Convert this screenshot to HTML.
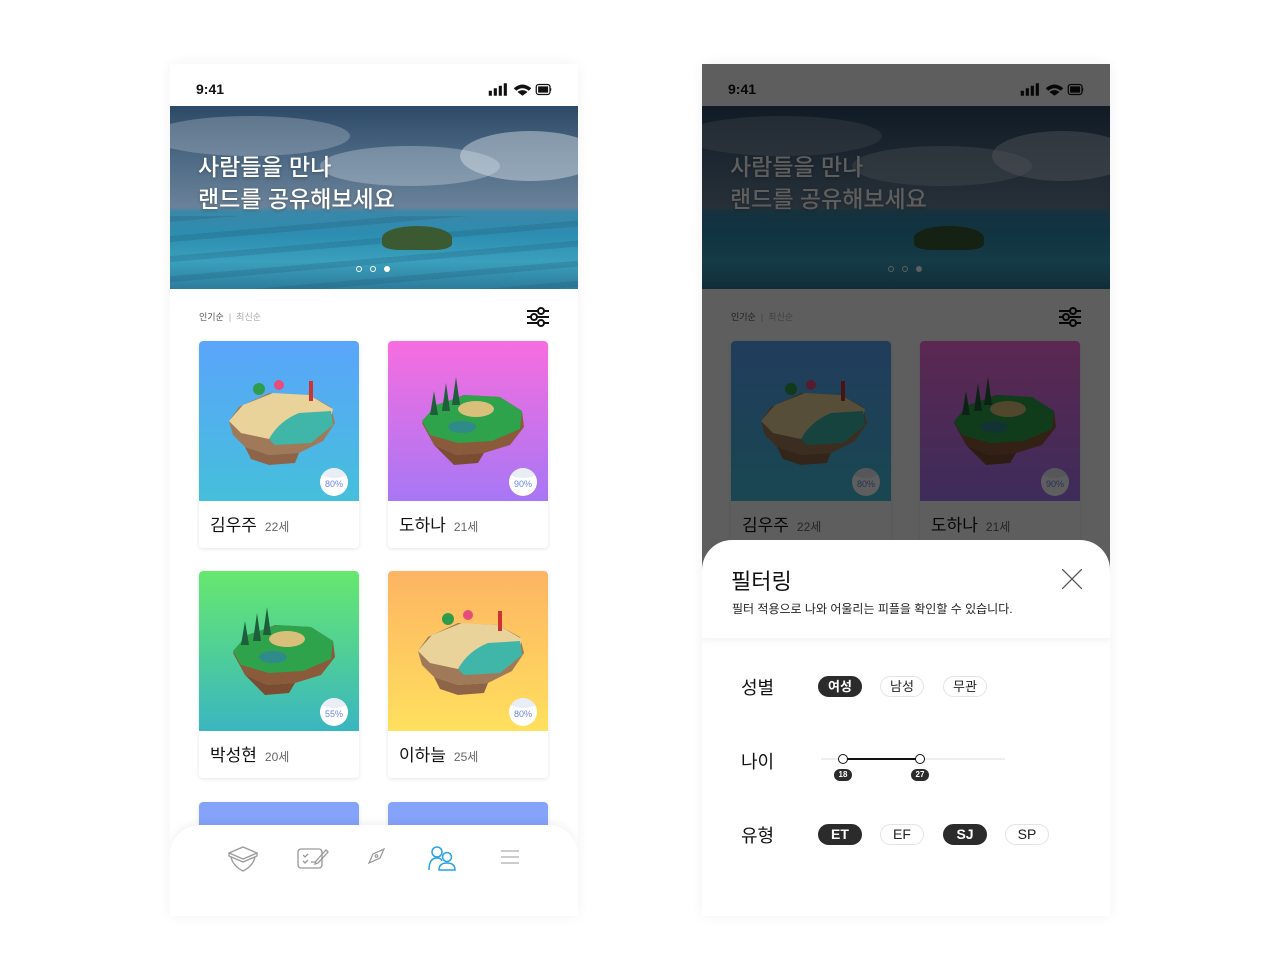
<!DOCTYPE html>
<html><head><meta charset="utf-8">
<style>
*{margin:0;padding:0;box-sizing:border-box}
body{width:1280px;height:980px;background:#fff;font-family:"Liberation Sans","Noto Sans CJK KR",sans-serif;position:relative;overflow:hidden}
.phone{position:absolute;top:64px;width:408px;height:852px;background:#fff;overflow:hidden;box-shadow:0 0 12px rgba(0,0,0,0.06)}
.time{position:absolute;left:26px;top:17px;font-size:14px;font-weight:bold;color:#111}
.stat{position:absolute;right:26px;top:18px}
.banner{position:absolute;left:0;top:42px;width:408px;height:183px;overflow:hidden;background:linear-gradient(180deg,#2c4966 0%,#4f6b86 30%,#6a8299 55%,#3a87a8 58%,#2c8db0 70%,#3aa0bd 85%,#2d7c9c 100%)}
.btxt{position:absolute;left:28px;top:45px;color:#fff;font-size:23px;line-height:32px;font-weight:500;text-shadow:0 1px 3px rgba(0,0,0,.3)}
.sort{position:absolute;left:29px;top:246px;font-size:9px;color:#555}
.sort span{color:#aaa}
.card{position:absolute;width:160px;height:207px;background:#fff;border-radius:4px;box-shadow:0 1px 4px rgba(0,0,0,0.1);overflow:hidden}
.card .img{position:absolute;left:0;top:0;width:160px;height:160px;border-radius:4px 4px 0 0}
.card .nm{position:absolute;left:11px;top:170px;font-size:17px;color:#111}
.card .nm span{font-size:12px;color:#666;margin-left:8px}
.pct{position:absolute;right:11px;bottom:5px;width:28px;height:28px;border-radius:50%;background:#fff;font-size:9px;color:#6c86e8;text-align:center;line-height:32px;overflow:hidden}
.pct:before{content:"";position:absolute;left:-4px;top:-12px;width:36px;height:22px;border-radius:50%;background:rgba(200,210,230,.4)}
.nav{position:absolute;left:0;top:761px;width:408px;height:91px;background:#fff;border-radius:30px 30px 0 0;box-shadow:0 -3px 8px rgba(0,0,0,0.05)}
.ov{position:absolute;left:0;top:0;width:408px;height:852px;background:rgba(0,0,0,0.63)}
.sheet{position:absolute;left:0;top:476px;width:408px;height:376px;background:#fff;border-radius:30px 30px 0 0}
.sh-head{position:absolute;left:0;top:0;width:408px;height:98px;box-shadow:0 3px 6px rgba(0,0,0,0.05)}
.lbl{position:absolute;left:39px;font-size:18px;color:#111}
.chip{position:absolute;width:44px;height:21px;border-radius:11px;border:1px solid #e4e4e4;font-size:13px;text-align:center;line-height:19px;color:#222;background:#fff}
.chip.on{background:#2b2b2b;border-color:#2b2b2b;color:#fff;font-weight:bold}
</style></head><body>
<svg width="0" height="0" style="position:absolute">
<defs>
<symbol id="beach" viewBox="0 0 160 160">
<path d="M30 80 L40 66 70 52 110 54 132 66 136 82 124 100 100 112 70 114 46 106 34 94Z" fill="#a07a58"/>
<path d="M30 80 L44 64 74 52 110 54 134 68 130 84 104 96 70 98 42 92Z" fill="#e9d39a"/>
<path d="M70 98 Q80 80 100 72 L132 70 134 84 112 102 76 104Z" fill="#3fb6a8"/>
<path d="M46 106 L70 114 100 112 96 122 70 124 52 118Z" fill="#8d6447"/>
<circle cx="60" cy="48" r="6" fill="#2e9c4a"/><circle cx="80" cy="44" r="5" fill="#e74c7c"/><rect x="110" y="40" width="4" height="20" fill="#c33"/>
</symbol>
<symbol id="forest" viewBox="0 0 160 160">
<path d="M34 82 L46 66 76 54 112 56 134 70 136 86 122 104 96 112 68 114 46 104Z" fill="#8a5a3a"/>
<path d="M34 80 L48 64 78 54 112 56 134 70 132 88 104 100 70 102 42 94Z" fill="#2fa24c"/>
<ellipse cx="88" cy="68" rx="18" ry="8" fill="#d8c07a"/><ellipse cx="74" cy="86" rx="14" ry="6" fill="#2e8b8a"/>
<path d="M46 50 L50 74 42 74Z M58 42 L62 70 54 70Z M68 36 L72 64 64 64Z" fill="#1e5e3a"/>
<path d="M46 104 L68 114 96 112 90 122 66 124Z" fill="#7a4c32"/>
</symbol>
</defs></svg>

<!-- LEFT PHONE -->
<div class="phone" style="left:170px">
<div class="time">9:41</div>
<svg class="stat" width="64" height="15" viewBox="0 0 50 12"><rect x="0" y="7" width="2.5" height="4" fill="#111"/><rect x="4" y="5" width="2.5" height="6" fill="#111"/><rect x="8" y="3" width="2.5" height="8" fill="#111"/><rect x="12" y="1" width="2.5" height="10" fill="#111"/><path d="M20 5 Q27 -1 34 5 L32 7 Q27 3 22 7Z M23 8 Q27 5 31 8 L27 11Z" fill="#111"/><rect x="38" y="2" width="11" height="8" rx="2" fill="none" stroke="#111" stroke-width="1"/><rect x="39.5" y="3.5" width="8" height="5" fill="#111"/><rect x="49.3" y="5" width="0.7" height="2" fill="#111"/></svg>
<div class="banner">
<div style="position:absolute;left:-20px;top:10px;width:200px;height:40px;border-radius:50%;background:rgba(200,210,220,.3)"></div>
<div style="position:absolute;left:150px;top:40px;width:180px;height:40px;border-radius:50%;background:rgba(210,220,230,.35)"></div>
<div style="position:absolute;left:290px;top:25px;width:140px;height:50px;border-radius:50%;background:rgba(220,228,236,.45)"></div>
<div style="position:absolute;left:0;top:110px;width:408px;height:73px;background:repeating-linear-gradient(175deg,rgba(30,80,110,.22) 0 6px,transparent 6px 20px)"></div>
<div style="position:absolute;left:212px;top:120px;width:70px;height:24px;border-radius:60% 60% 30% 30%;background:#3b5a32"></div>
<div class="btxt">사람들을 만나<br>랜드를 공유해보세요</div>
<div style="position:absolute;left:186px;top:160px;width:6px;height:6px;border:1px solid #fff;border-radius:50%"></div>
<div style="position:absolute;left:200px;top:160px;width:6px;height:6px;border:1px solid #fff;border-radius:50%"></div>
<div style="position:absolute;left:214px;top:160px;width:6px;height:6px;background:#fff;border-radius:50%"></div>
</div>
<div class="sort">인기순 <span>&nbsp;|&nbsp; 최신순</span></div>
<svg style="position:absolute;left:357px;top:243px" width="22" height="20" viewBox="0 0 22 20" fill="none" stroke="#111" stroke-width="2"><path d="M0 4H22M0 10H22M0 16H22"/><circle cx="14" cy="4" r="3" fill="#fff"/><circle cx="7" cy="10" r="3" fill="#fff"/><circle cx="14" cy="16" r="3" fill="#fff"/></svg>

<div class="card" style="left:29px;top:277px"><div class="img" style="background:linear-gradient(#5aa5fb,#45bfdb)"><svg width="160" height="160"><use href="#beach"/></svg><div class="pct">80%</div></div><div class="nm">김우주<span>22세</span></div></div>
<div class="card" style="left:218px;top:277px"><div class="img" style="background:linear-gradient(#f76ddf,#a777f5)"><svg width="160" height="160"><use href="#forest"/></svg><div class="pct">90%</div></div><div class="nm">도하나<span>21세</span></div></div>
<div class="card" style="left:29px;top:507px"><div class="img" style="background:linear-gradient(#66e86e,#3ab6c0)"><svg width="160" height="160"><use href="#forest"/></svg><div class="pct">55%</div></div><div class="nm">박성현<span>20세</span></div></div>
<div class="card" style="left:218px;top:507px"><div class="img" style="background:linear-gradient(#fdb463,#ffe05e)"><svg width="160" height="160"><use href="#beach"/></svg><div class="pct">80%</div></div><div class="nm">이하늘<span>25세</span></div></div>
<div class="card" style="left:29px;top:738px"><div class="img" style="background:#86a3fb"></div></div>
<div class="card" style="left:218px;top:738px"><div class="img" style="background:#86a3fb"></div></div>

<div class="nav">
<svg style="position:absolute;left:58px;top:21px" width="30" height="26" viewBox="0 0 30 26" fill="none" stroke="#999" stroke-width="1.3"><path d="M1 7L15 1 29 7 15 13Z"/><path d="M1 7V10L15 16 29 10V7"/><path d="M3 11Q5 20 15 25Q25 20 27 11"/></svg>
<svg style="position:absolute;left:127px;top:22px" width="32" height="22" viewBox="0 0 32 22" fill="none" stroke="#999" stroke-width="1.3"><rect x="1" y="2" width="24" height="19" rx="3"/><path d="M6 8l2 2 3-3M6 14l2 2 3-3M14 15h5"/><path d="M19 14L29 3 31 5 21 16 18 17Z"/></svg>
<svg style="position:absolute;left:198px;top:23px" width="18" height="16" viewBox="0 0 18 16" fill="none" stroke="#999" stroke-width="1.2"><path d="M1 15L5 6 16 1 12 10Z"/><circle cx="8.5" cy="8" r="1.3"/></svg>
<svg style="position:absolute;left:258px;top:20px" width="28" height="26" viewBox="0 0 28 26" fill="none" stroke="#27a2e4" stroke-width="1.5"><circle cx="9" cy="7" r="5"/><path d="M1 25Q1 13 9 13Q13 13 14 16"/><circle cx="19" cy="12" r="4.5"/><path d="M11 25Q11 18 19 18Q27 18 27 25Z"/></svg>
<svg style="position:absolute;left:331px;top:25px" width="18" height="14" viewBox="0 0 18 14" stroke="#bbb" stroke-width="1.4"><path d="M0 1H18M0 7H18M0 13H18"/></svg>
</div>
</div>

<!-- RIGHT PHONE -->
<div class="phone" style="left:702px">
<div class="time">9:41</div>
<svg class="stat" width="64" height="15" viewBox="0 0 50 12"><rect x="0" y="7" width="2.5" height="4" fill="#111"/><rect x="4" y="5" width="2.5" height="6" fill="#111"/><rect x="8" y="3" width="2.5" height="8" fill="#111"/><rect x="12" y="1" width="2.5" height="10" fill="#111"/><path d="M20 5 Q27 -1 34 5 L32 7 Q27 3 22 7Z M23 8 Q27 5 31 8 L27 11Z" fill="#111"/><rect x="38" y="2" width="11" height="8" rx="2" fill="none" stroke="#111" stroke-width="1"/><rect x="39.5" y="3.5" width="8" height="5" fill="#111"/><rect x="49.3" y="5" width="0.7" height="2" fill="#111"/></svg>
<div class="banner">
<div style="position:absolute;left:-20px;top:10px;width:200px;height:40px;border-radius:50%;background:rgba(200,210,220,.3)"></div>
<div style="position:absolute;left:150px;top:40px;width:180px;height:40px;border-radius:50%;background:rgba(210,220,230,.35)"></div>
<div style="position:absolute;left:290px;top:25px;width:140px;height:50px;border-radius:50%;background:rgba(220,228,236,.45)"></div>
<div style="position:absolute;left:212px;top:120px;width:70px;height:24px;border-radius:60% 60% 30% 30%;background:#3b5a32"></div>
<div class="btxt">사람들을 만나<br>랜드를 공유해보세요</div>
<div style="position:absolute;left:186px;top:160px;width:6px;height:6px;border:1px solid #fff;border-radius:50%"></div>
<div style="position:absolute;left:200px;top:160px;width:6px;height:6px;border:1px solid #fff;border-radius:50%"></div>
<div style="position:absolute;left:214px;top:160px;width:6px;height:6px;background:#fff;border-radius:50%"></div>
</div>
<div class="sort">인기순 <span>&nbsp;|&nbsp; 최신순</span></div>
<svg style="position:absolute;left:357px;top:243px" width="22" height="20" viewBox="0 0 22 20" fill="none" stroke="#111" stroke-width="2"><path d="M0 4H22M0 10H22M0 16H22"/><circle cx="14" cy="4" r="3" fill="#fff"/><circle cx="7" cy="10" r="3" fill="#fff"/><circle cx="14" cy="16" r="3" fill="#fff"/></svg>
<div class="card" style="left:29px;top:277px"><div class="img" style="background:linear-gradient(#5aa5fb,#45bfdb)"><svg width="160" height="160"><use href="#beach"/></svg><div class="pct">80%</div></div><div class="nm">김우주<span>22세</span></div></div>
<div class="card" style="left:218px;top:277px"><div class="img" style="background:linear-gradient(#f76ddf,#a777f5)"><svg width="160" height="160"><use href="#forest"/></svg><div class="pct">90%</div></div><div class="nm">도하나<span>21세</span></div></div>
<div class="ov"></div>
<div class="sheet">
<div class="sh-head">
<div style="position:absolute;left:29px;top:24px;font-size:22px;color:#111">필터링</div>
<div style="position:absolute;left:30px;top:60px;font-size:12px;color:#222">필터 적용으로 나와 어울리는 피플을 확인할 수 있습니다.</div>
<svg style="position:absolute;left:360px;top:29px" width="20" height="20" viewBox="0 0 20 20" stroke="#555" stroke-width="1.3"><path d="M0 0L20 20M20 0L0 20"/></svg>
</div>
<div class="lbl" style="top:134px">성별</div>
<div class="chip on" style="left:116px;top:136px">여성</div>
<div class="chip" style="left:178px;top:136px">남성</div>
<div class="chip" style="left:241px;top:136px">무관</div>
<div class="lbl" style="top:208px">나이</div>
<div style="position:absolute;left:119px;top:218px;width:184px;height:2px;background:#eee"></div>
<div style="position:absolute;left:141px;top:218px;width:77px;height:2px;background:#111"></div>
<div style="position:absolute;left:136px;top:214px;width:10px;height:10px;border:1.5px solid #111;border-radius:50%;background:#fff"></div>
<div style="position:absolute;left:213px;top:214px;width:10px;height:10px;border:1.5px solid #111;border-radius:50%;background:#fff"></div>
<div style="position:absolute;left:132px;top:229px;width:18px;height:12px;border-radius:6px;background:#2b2b2b;color:#fff;font-size:8px;font-weight:bold;text-align:center;line-height:12px">18</div>
<div style="position:absolute;left:209px;top:229px;width:18px;height:12px;border-radius:6px;background:#2b2b2b;color:#fff;font-size:8px;font-weight:bold;text-align:center;line-height:12px">27</div>
<div class="lbl" style="top:282px">유형</div>
<div class="chip on" style="left:116px;top:284px;font-size:14px">ET</div>
<div class="chip" style="left:178px;top:284px;font-size:14px">EF</div>
<div class="chip on" style="left:241px;top:284px;font-size:14px">SJ</div>
<div class="chip" style="left:303px;top:284px;font-size:14px">SP</div>
</div>
</div>
</body></html>
